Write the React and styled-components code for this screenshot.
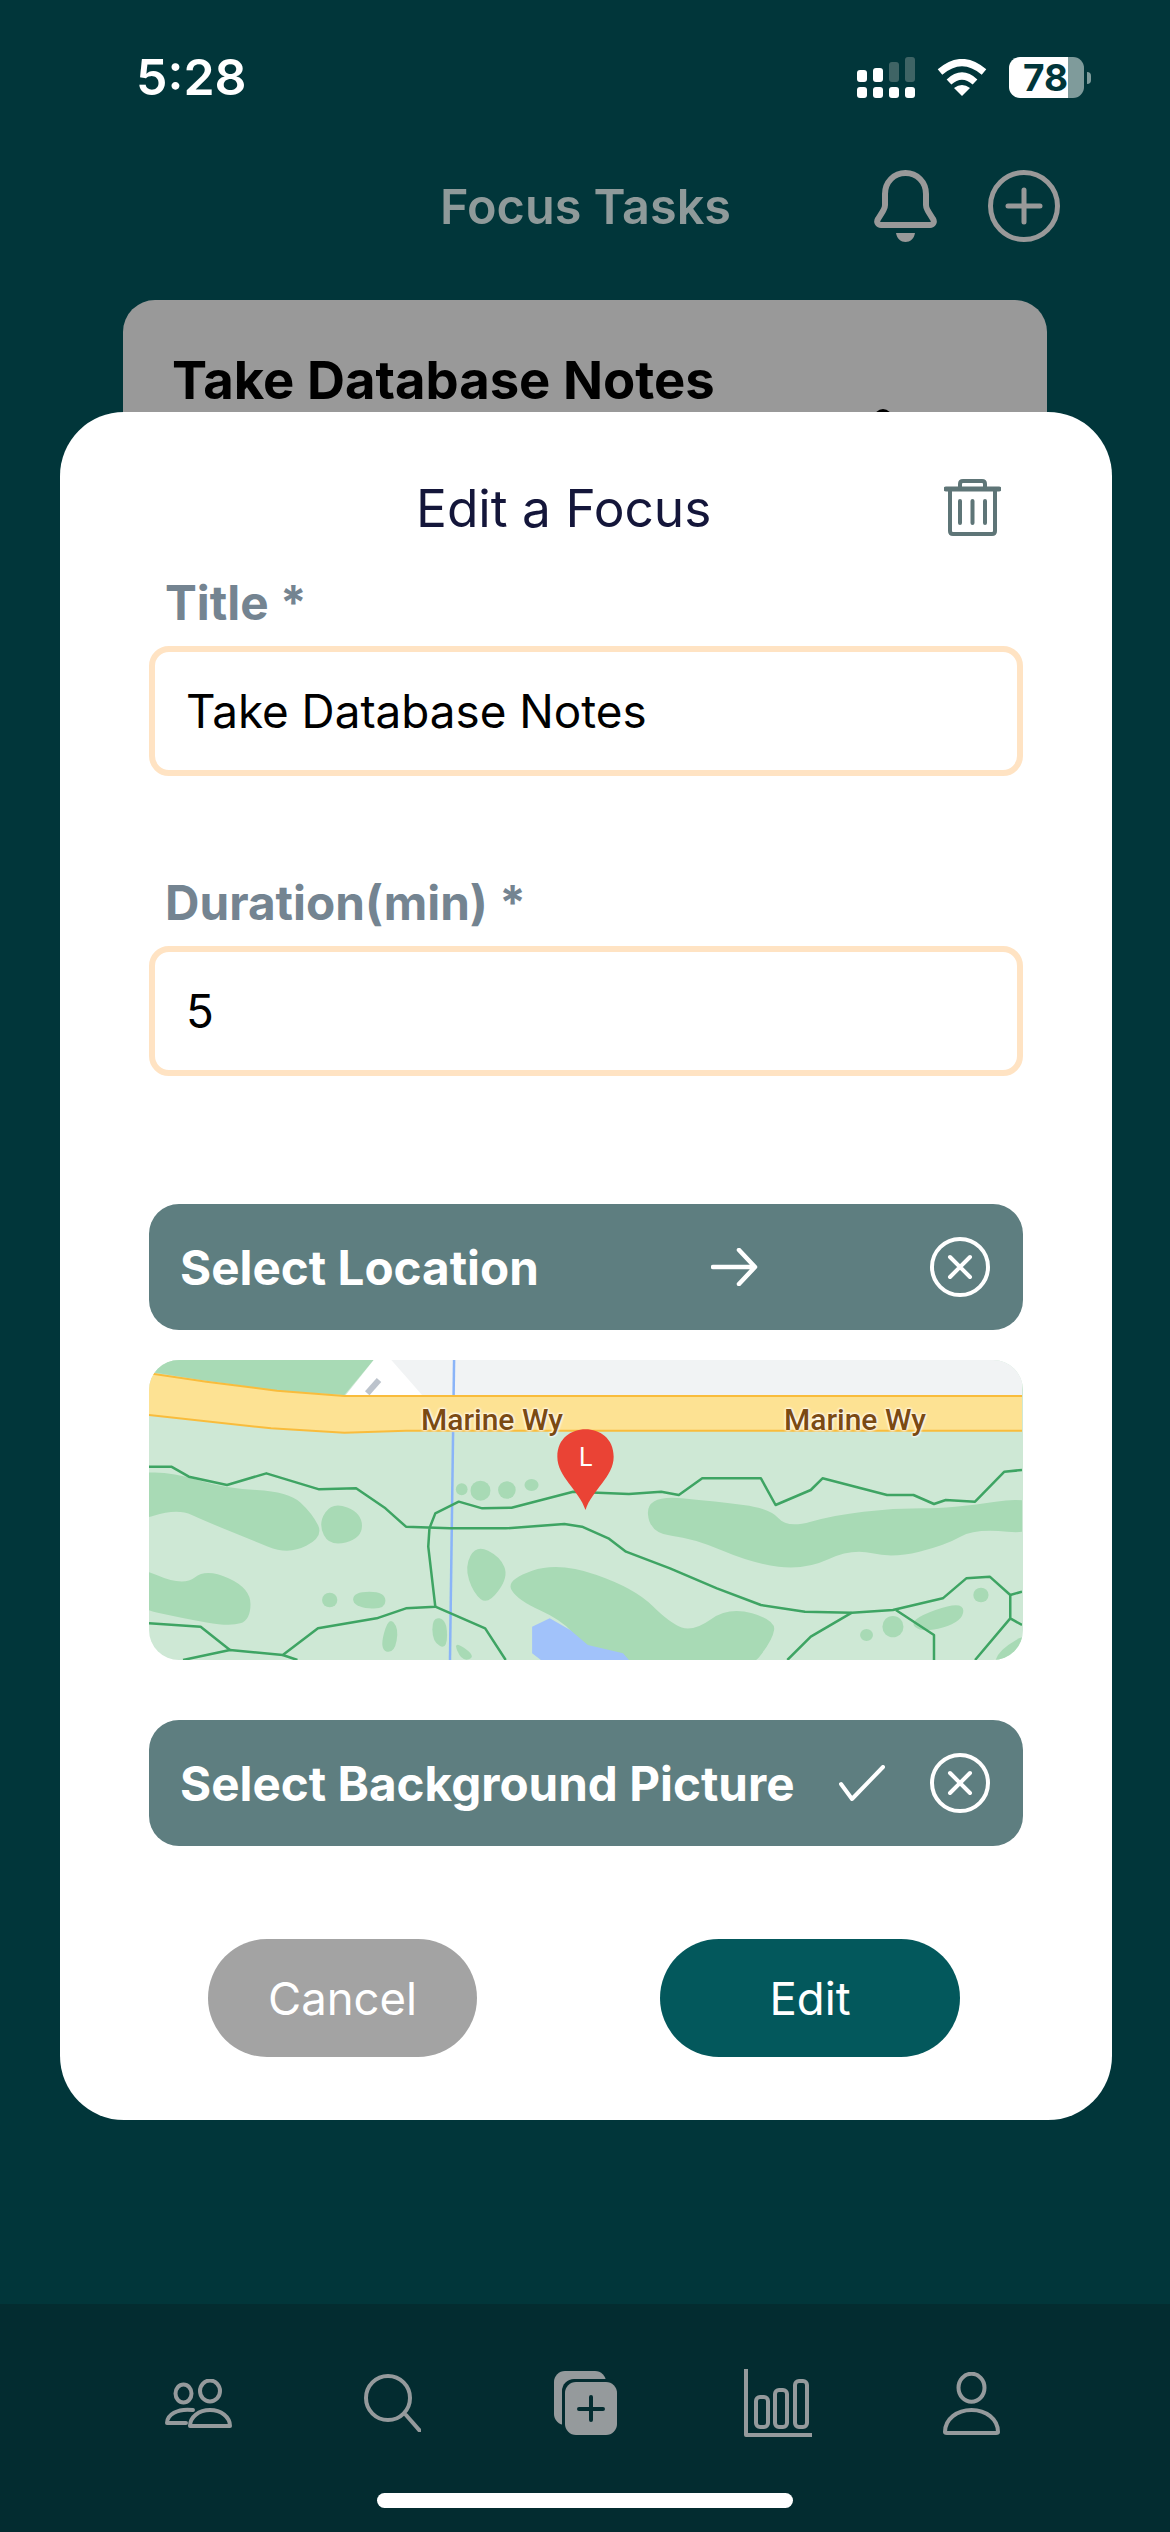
import React from 'react';
import styled, { createGlobalStyle } from 'styled-components';

const GlobalStyle = createGlobalStyle`
    html, body {
        margin: 0;
        padding: 0;
        background: #01363a;
    }
    * {
        box-sizing: border-box;
    }
`

const Screen = styled.div`
    position: relative;
    width: 1170px;
    height: 2532px;
    display: flex;
    flex-direction: column;
    overflow: hidden;
    background: #01363a;
    font-family: Inter, "Liberation Sans", sans-serif;
`

const StatusBar = styled.div`
    display: flex;
    align-items: center;
    justify-content: space-between;
    height: 41px;
    margin-top: 57px;
    padding: 0 79px 0 136px;
`

const Clock = styled.div`
    color: #fff;
    font-size: 50px;
    font-weight: 600;
    line-height: 41px;
`

const StatusIcons = styled.div`
    display: flex;
    align-items: center;
    gap: 22px;
`

const Battery = styled.div`
    display: flex;
    align-items: center;
    gap: 3px;
`

const BatteryBody = styled.div`
    width: 75px;
    height: 41px;
    padding-left: 14px;
    border-radius: 11px;
    background: linear-gradient(90deg, #fff 0 59px, #7f9b9b 59px);
    color: #01363a;
    font-size: 37px;
    font-weight: 700;
    line-height: 41px;
`

const BatteryCap = styled.div`
    width: 4px;
    height: 12px;
    border-radius: 0 6px 6px 0;
    background: #7f9b9b;
`

const Header = styled.div`
    display: flex;
    align-items: center;
    gap: 51px;
    height: 72px;
    margin-top: 72px;
    padding: 0 110px 0 440px;
`

const HeaderTitle = styled.div`
    margin-right: auto;
    color: #8f9a9a;
    font-size: 48.6px;
    font-weight: 600;
`

const Card = styled.div`
    position: relative;
    height: 420px;
    margin: 58px 123px 0;
    padding: 50px 50px 50px 49px;
    border-radius: 32px;
    background: #999;
    color: #000;
    font-size: 52.6px;
    font-weight: 700;
`

const CardTitle = styled.div`
    line-height: 60px;
    white-space: nowrap;
`

const CardDot = styled.div`
    position: absolute;
    top: 109px;
    left: 751px;
    width: 18px;
    height: 18px;
    border-radius: 50%;
    background: #000;
`

const Modal = styled.div`
    position: absolute;
    top: 412px;
    left: 60px;
    width: 1052px;
    height: 1708px;
    padding: 62px 89px 0;
    border-radius: 64px;
    background: #fff;
`

const ModalHeader = styled.div`
    display: flex;
    align-items: center;
    height: 68px;
    padding-left: 267px;
    padding-right: 22px;
`

const ModalTitle = styled.div`
    margin-right: auto;
    color: #14163a;
    font-size: 51.4px;
    font-weight: 400;
`

const Label = styled.div`
    margin-top: ${(props) => props.$top}px;
    padding-left: 16px;
    color: #748491;
    font-size: 47.7px;
    font-weight: 700;
    line-height: 56px;
`

const Field = styled.div`
    display: flex;
    align-items: center;
    height: 130px;
    margin-top: 15px;
    padding: 0 31px;
    border: 6px solid #ffe3c3;
    border-radius: 20px;
    color: #000;
    font-size: 45.8px;
`

const Row = styled.div`
    display: flex;
    align-items: center;
    justify-content: space-between;
    height: 126px;
    margin-top: ${(props) => props.$top}px;
    padding: 0 33px 0 31px;
    border-radius: 30px;
    background: #5e7e80;
    color: #fff;
    font-size: 47.6px;
    font-weight: 700;
`

const MapBox = styled.div`
    position: relative;
    height: 300px;
    margin-top: 30px;
    border-radius: 30px;
    overflow: hidden;
    background: #cee8d5;
    svg {
        display: block;
    }
`

const RoadName = styled.span`
    position: absolute;
    top: 43px;
    left: ${(props) => props.$left}px;
    color: #7b4a12;
    font-family: Roboto, sans-serif;
    font-size: 30px;
    font-weight: 500;
    line-height: 34px;
    text-shadow: 0 0 3px #fff, 0 0 3px #fff, 0 0 3px #fff;
`

const PinLetter = styled.span`
    position: absolute;
    top: 83px;
    left: 430px;
    color: #fff;
    font-family: Roboto, sans-serif;
    font-size: 25px;
    font-weight: 400;
    line-height: 30px;
`

const Actions = styled.div`
    display: flex;
    margin-top: 93px;
    padding-left: 59px;
    gap: 183px;
`

const ActionButton = styled.div`
    display: flex;
    align-items: center;
    justify-content: center;
    width: ${(props) => props.$width}px;
    height: 118px;
    border-radius: 59px;
    background: ${(props) => props.$bg};
    color: #fff;
    font-size: 45.5px;
    font-weight: 400;
`

const TabBar = styled.div`
    display: flex;
    flex-direction: column;
    align-items: center;
    height: 228px;
    margin-top: auto;
    background: #032c30;
`

const TabRow = styled.div`
    display: grid;
    grid-template-columns: repeat(5, 193px);
    align-items: center;
    justify-items: center;
    width: 965px;
    height: 189px;
    padding-top: 9px;
`

const HomeIndicator = styled.div`
    width: 416px;
    height: 15px;
    border-radius: 8px;
    background: #fff;
`

const Signal = () => (
    <svg width="58" height="41" viewBox="0 0 58 41" fill="#fff">
        <rect x="0" y="30" width="10" height="11" rx="3" />
        <rect x="16" y="30" width="10" height="11" rx="3" />
        <rect x="32" y="30" width="10" height="11" rx="3" />
        <rect x="48" y="30" width="10" height="11" rx="3" />
        <rect x="0" y="13" width="10" height="12" rx="3" />
        <rect x="16" y="11" width="10" height="14" rx="3" />
        <rect x="32" y="5" width="10" height="20" rx="3" fill="#3f6465" />
        <rect x="48" y="0" width="10" height="25" rx="3" fill="#3f6465" />
    </svg>
)

const Wifi = () => (
    <svg width="50" height="37" viewBox="0 0 50 37" fill="none" stroke="#fff">
        <path d="M3 13Q25 -6 47 13" strokeWidth="7" />
        <path d="M12 23Q25 11 38 23" strokeWidth="7" />
        <path d="M17 29Q25 23 33 29L25 37Z" fill="#fff" stroke="none" />
    </svg>
)

const Bell = () => (
    <svg width="63" height="72" viewBox="0 0 63 72" fill="none">
        <path d="M11 24C11 12 20 3 31.5 3S52 12 52 24V35C52 38 53 39 54 41L59 49C61 52 59 55 56 55H7C4 55 2 52 4 49L9 41C10 39 11 38 11 35Z" stroke="#999" strokeWidth="6" />
        <path d="M22 63H41C40 69 36 72 31.5 72S23 69 22 63Z" fill="#999" />
    </svg>
)

const PlusCircle = () => (
    <svg width="72" height="72" viewBox="0 0 72 72" fill="none" stroke="#999" strokeWidth="5" strokeLinecap="round">
        <circle cx="36" cy="36" r="33.5" />
        <path d="M36 20V52M20 36H52" />
    </svg>
)

const Trash = () => (
    <svg width="57" height="58" viewBox="0 0 57 58" fill="none" stroke="#5e7577" strokeLinecap="round" strokeLinejoin="round">
        <path d="M2 10H55" strokeWidth="5" />
        <path d="M16 9V5Q16 2 19 2H38Q41 2 41 5V9" strokeWidth="4" />
        <path d="M6 10V52Q6 55 9 55H48Q51 55 51 52V10" strokeWidth="4" />
        <path d="M16 22V44M28.5 22V44M41 22V44" strokeWidth="4" />
    </svg>
)

const ArrowRight = () => (
    <svg width="47" height="38" viewBox="0 0 47 38" fill="none" stroke="#fff" strokeWidth="4.5" strokeLinecap="round" strokeLinejoin="round">
        <path d="M2 19H43M28 2L44 19L28 36" />
    </svg>
)

const Check = () => (
    <svg width="46" height="36" viewBox="0 0 46 36" fill="none" stroke="#fff" strokeWidth="4" strokeLinecap="round" strokeLinejoin="round">
        <path d="M2 19L13 34L44 2" />
    </svg>
)

const CloseCircle = () => (
    <svg width="60" height="60" viewBox="0 0 60 60" fill="none" stroke="#fff" strokeWidth="4" strokeLinecap="round">
        <circle cx="30" cy="30" r="28" />
        <path d="M20 20L40 40M40 20L20 40" />
    </svg>
)

const People = () => (
    <svg width="68" height="49" viewBox="0 0 68 49" fill="none" stroke="#959a9c" strokeWidth="4" strokeLinejoin="round" strokeLinecap="round">
        <ellipse cx="45" cy="12" rx="10" ry="10.5" />
        <ellipse cx="18.5" cy="14.5" rx="8" ry="9" />
        <path d="M25 47C25 38 34 31 45 31S65 38 65 47Z" />
        <path d="M28 31C12 29 2 36 2 44H21" />
    </svg>
)

const Search = () => (
    <svg width="57" height="58" viewBox="0 0 57 58" fill="none" stroke="#959a9c" strokeWidth="4" strokeLinecap="round">
        <circle cx="24" cy="24" r="22" />
        <path d="M42 41L56 57" />
    </svg>
)

const CopyPlus = () => (
    <svg width="63" height="64" viewBox="0 0 63 64">
        <rect x="0" y="0" width="52" height="54" rx="11" fill="#959a9c" />
        <rect x="8" y="8" width="58" height="60" rx="12" fill="#032c30" />
        <rect x="11" y="11" width="52" height="53" rx="11" fill="#959a9c" />
        <path d="M37 26V49M25 38H49" stroke="#032c30" strokeWidth="4" strokeLinecap="round" />
    </svg>
)

const Chart = () => (
    <svg width="68" height="68" viewBox="0 0 68 68" fill="none" stroke="#959a9c" strokeWidth="4" strokeLinejoin="round">
        <path d="M2 0V66H68" />
        <rect x="12" y="28" width="12" height="30" rx="4" />
        <rect x="31" y="21" width="12" height="37" rx="4" />
        <rect x="51" y="12" width="12" height="46" rx="4" />
    </svg>
)

const User = () => (
    <svg width="57" height="63" viewBox="0 0 57 63" fill="none" stroke="#959a9c" strokeWidth="4" strokeLinejoin="round">
        <ellipse cx="28.5" cy="15.7" rx="13" ry="14" />
        <path d="M2 60C2 47 14 38 28.5 38S55 47 55 60Q55 61 53 61H4Q2 61 2 60Z" />
    </svg>
)

// 꼭짓점 사이 중간점을 이어서 둥근 덩어리로 만든다
const smoothBlob = (points) => {
    const mid = (a, b) => [(a[0] + b[0]) / 2, (a[1] + b[1]) / 2];
    const start = mid(points[points.length - 1], points[0]);
    let d = `M${start[0]} ${start[1]}`;
    points.forEach((point, i) => {
        const end = mid(point, points[(i + 1) % points.length]);
        d += `Q${point[0]} ${point[1]} ${end[0]} ${end[1]}`;
    });
    return `${d}Z`;
}

// 지도 좌표는 크롭 기준 (가로 1.704배, 세로 3배)
const greenBlobs = [
    [[0, 880], [70, 875], [160, 925], [270, 935], [310, 1000], [330, 1070], [270, 1125], [200, 1075], [130, 1025], [80, 985], [0, 1030]],
    [[345, 965], [395, 1000], [395, 1075], [340, 1100], [320, 1030]],
    [[880, 945], [1000, 965], [1090, 985], [1120, 1045], [1200, 1005], [1300, 985], [1400, 985], [1550, 945], [1550, 1065], [1440, 1045], [1390, 1095], [1300, 1135], [1230, 1105], [1150, 1170], [1060, 1150], [960, 1075], [885, 1060]],
    [[0, 1150], [90, 1220], [130, 1165], [205, 1225], [205, 1320], [170, 1340], [90, 1315], [0, 1280]],
    [[590, 1095], [630, 1130], [645, 1190], [610, 1275], [585, 1240], [570, 1160]],
    [[640, 1200], [730, 1145], [860, 1225], [920, 1330], [960, 1355], [1020, 1280], [1100, 1320], [1095, 1380], [1050, 1480], [820, 1480], [770, 1390], [735, 1320], [660, 1260]],
    [[380, 1235], [435, 1235], [435, 1290], [380, 1280]],
    [[1325, 1320], [1420, 1260], [1420, 1325], [1350, 1360]],
    [[425, 1410], [440, 1310], [458, 1345], [450, 1420]],
    [[515, 1310], [540, 1320], [540, 1410], [515, 1385]],
    [[550, 1380], [590, 1430], [565, 1445]],
    [[1480, 1410], [1540, 1350], [1540, 1470], [1470, 1470]],
]

const greenDots = [
    [565, 928, 10, 18],
    [597, 932, 17, 30],
    [642, 930, 15, 26],
    [684, 915, 12, 18],
    [340, 1260, 13, 22],
    [1300, 1340, 18, 32],
    [1255, 1365, 11, 18],
    [1450, 1245, 13, 22],
]

const trails = [
    'M32 860L70 860L100 890L165 915L232 880L322 928L385 925L435 985L470 1040L545 1045L640 1045L740 1032L770 1040L815 1075L845 1115L920 1165L1000 1225L1075 1275L1150 1295L1230 1298L1300 1290L1385 1255L1425 1195L1465 1190L1500 1245L1520 1235',
    'M510 1045L520 1000L560 965L600 985L650 983L755 935L850 942L905 935L935 945L975 895L1075 895L1100 975L1160 930L1180 895L1290 945L1335 945L1370 972L1390 960L1440 965L1490 875L1520 870',
    'M510 1045L508 1100L520 1280L470 1285L420 1315L320 1345L260 1425L170 1410L90 1440',
    'M32 1330L120 1340L170 1410M260 1425L285 1440',
    'M520 1280L605 1345L640 1440',
    'M1230 1298L1160 1370L1120 1440',
    'M1305 1290L1370 1365V1440',
    'M1500 1245V1315L1520 1335M1500 1315L1440 1440',
]

const MapDrawing = () => (
    <svg width="873" height="300" viewBox="32 540 1488 900" preserveAspectRatio="none" fill="none">
        <path d="M440 540H1520V660H500Z" fill="#f1f3f4" />
        <path d="M45 540H415L365 645L250 632L120 600L32 575Z" fill="#a8dab5" />
        {greenBlobs.map((points) => (
            <path key={points.join()} d={smoothBlob(points)} fill="#a8dab5" />
        ))}
        {greenDots.map(([cx, cy, rx, ry]) => (
            <ellipse key={`${cx}-${cy}`} cx={cx} cy={cy} rx={rx} ry={ry} fill="#a8dab5" />
        ))}
        <path d="M415 540H445L500 650H365Z" fill="#fff" />
        <path d="M404 640L424 600" stroke="#bcc3cc" strokeWidth="6" vectorEffect="non-scaling-stroke" />
        <path d="M552 540L545 1440" stroke="#8ab4f8" strokeWidth="2.5" vectorEffect="non-scaling-stroke" />
        <path d="M685 1340L715 1315L750 1350L780 1395L840 1420L850 1440H700L685 1420Z" fill="#a1c2fa" />
        <path d="M32 580L130 605L250 632L365 648H1520V752H470L365 758L240 745L32 705Z" fill="#fde293" />
        <path d="M32 580L130 605L250 632L365 648H1520M1520 752H470L365 758L240 745L32 705" stroke="#f9bc3c" strokeWidth="2" vectorEffect="non-scaling-stroke" />
        {trails.map((d) => (
            <path key={d} d={d} stroke="#3ea463" strokeWidth="2.5" strokeLinejoin="round" vectorEffect="non-scaling-stroke" />
        ))}
        <path d="M776 990C765 930 728 890 728 830C728 775 752 748 776 748S824 775 824 830C824 890 787 930 776 990Z" fill="#ea4335" />
    </svg>
)

function App() {
    return (
        <Screen>
            <GlobalStyle />
            <StatusBar>
                <Clock>5:28</Clock>
                <StatusIcons>
                    <Signal />
                    <Wifi />
                    <Battery>
                        <BatteryBody>78</BatteryBody>
                        <BatteryCap />
                    </Battery>
                </StatusIcons>
            </StatusBar>

            <Header>
                <HeaderTitle>Focus Tasks</HeaderTitle>
                <Bell />
                <PlusCircle />
            </Header>

            <Card>
                <CardTitle>Take Database Notes</CardTitle>
                <CardDot />
            </Card>

            <Modal>
                <ModalHeader>
                    <ModalTitle>Edit a Focus</ModalTitle>
                    <Trash />
                </ModalHeader>

                <Label $top={33}>Title *</Label>
                <Field>Take Database Notes</Field>

                <Label $top={99}>Duration(min) *</Label>
                <Field>5</Field>

                <Row $top={128}>
                    <span>Select Location</span>
                    <ArrowRight />
                    <CloseCircle />
                </Row>

                <MapBox>
                    <MapDrawing />
                    <RoadName $left={272}>Marine Wy</RoadName>
                    <RoadName $left={635}>Marine Wy</RoadName>
                    <PinLetter>L</PinLetter>
                </MapBox>

                <Row $top={60}>
                    <span>Select Background Picture</span>
                    <Check />
                    <CloseCircle />
                </Row>

                <Actions>
                    <ActionButton $width={269} $bg="#a3a3a3">Cancel</ActionButton>
                    <ActionButton $width={300} $bg="#03585c">Edit</ActionButton>
                </Actions>
            </Modal>

            <TabBar>
                <TabRow>
                    <People />
                    <Search />
                    <CopyPlus />
                    <Chart />
                    <User />
                </TabRow>
                <HomeIndicator />
            </TabBar>
        </Screen>
    );
}

export default App;
